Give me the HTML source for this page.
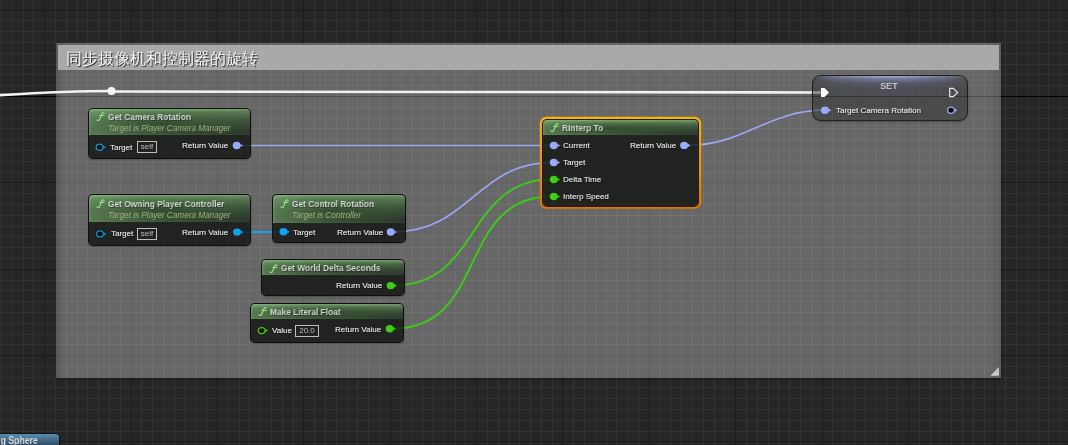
<!DOCTYPE html><html><head><meta charset="utf-8"><style>
*{margin:0;padding:0;box-sizing:border-box}
html,body{width:1068px;height:445px;overflow:hidden;background:#262626}
body{position:relative;font-family:"Liberation Sans",sans-serif}
.pl,.ttl,.sub,.settl,.box,.tt,.btn span{will-change:transform}
.abs{position:absolute}
.cmt{position:absolute;left:56px;top:43px;width:945px;height:335px;background:rgba(255,255,255,0.30);box-shadow:inset 7px 0 7px -5px rgba(0,0,0,0.22),inset -7px 0 7px -5px rgba(0,0,0,0.15),0 1px 2px rgba(0,0,0,0.5)}
.cmt .tb{position:absolute;left:2px;top:2px;right:2px;height:25px;background:#a9a9a9}
.cmt .tt{position:absolute;left:7.5px;top:5.3px;font-size:15.8px;font-weight:500;color:#f2f2f2;text-shadow:1px 1px 0.8px rgba(20,20,20,0.85);white-space:nowrap;line-height:18px}
.node{position:absolute;border-radius:4px;background:rgba(12,14,12,0.77);box-shadow:0 0 0 1px #0e0e0e,0 1px 3px rgba(0,0,0,0.5)}
.node.sel{box-shadow:0 0 0 1px #2a1a06}
.selr{position:absolute;border-radius:6px;background:linear-gradient(#f4b200,#e88a00)}
.hdr{position:absolute;left:0;top:0;right:0;border-radius:4px 4px 0 0;background:linear-gradient(to bottom, rgba(190,240,180,0.25) 0px, rgba(190,240,180,0.08) 2px, rgba(0,0,0,0) 4px),radial-gradient(ellipse 65% 65% at 45% 55%, rgba(15,30,15,0.5), rgba(15,30,15,0) 100%),linear-gradient(to bottom right,#6e9868 0%,#62895c 35%,#55764f 55%,#3b5039 78%,#283228 100%);box-shadow:inset 1px 0 2px rgba(170,230,160,0.25)}
.ttl{position:absolute;font-weight:bold;color:#d4d4d4;white-space:nowrap;text-shadow:1px 1px 0 rgba(0,0,0,0.35);transform:scaleX(0.87);transform-origin:0 0}
.sub{position:absolute;font-style:italic;color:#a3b07e;white-space:nowrap}
.pl{position:absolute;color:#e6e6e6;white-space:nowrap;text-shadow:0.4px 0 0 rgba(230,230,230,0.4),1px 1px 0 rgba(0,0,0,0.6)}
.box{position:absolute;border:1px solid #bdbdbd}
.box span{position:absolute;left:0;right:0;top:0.2px;text-align:center;font-size:8px;line-height:9px;color:#bdbdbd}
.setn{position:absolute;border-radius:8px;background:rgba(40,40,40,0.45);box-shadow:0 0 0 1px #1e1e1e,0 1px 3px rgba(0,0,0,0.5);overflow:hidden}
.setgl{position:absolute;left:0;top:0;right:0;height:20px;background:linear-gradient(to bottom,rgba(175,190,245,0.8) 0px,rgba(150,165,225,0.5) 3px,rgba(120,130,185,0.2) 8px,rgba(100,110,160,0.12) 14px,rgba(90,100,150,0.18) 19px);-webkit-mask-image:linear-gradient(to right,rgba(0,0,0,0.1) 0%,rgba(0,0,0,0.6) 15%,#000 40%,#000 60%,rgba(0,0,0,0.6) 85%,rgba(0,0,0,0.1) 100%)}
.settl{position:absolute;text-align:center;font-size:9px;line-height:11px;color:#d4d4d4;text-shadow:0.4px 0 0 rgba(212,212,212,0.5)}
.setsep{position:absolute;left:0;right:0;top:20px;height:1px;background:#333}
.btn{position:absolute;left:-20px;top:432.5px;width:80px;height:20px;border-radius:4px;border:1px solid #111;background:linear-gradient(#5b8db0,#2f4f66 60%,#2a3f50)}
.btn span{position:absolute;right:21.5px;top:1.5px;font-size:10px;line-height:12px;font-weight:bold;color:#d8d8d8;white-space:nowrap;transform:scaleX(0.87);transform-origin:100% 0}
</style></head><body>
<svg class="abs" width="1068" height="445" style="left:0;top:0" shape-rendering="crispEdges"><rect width="1068" height="445" fill="#262626"/><rect x="1" y="0" width="1" height="445" fill="#333333"/><rect x="12" y="0" width="1" height="445" fill="#333333"/><rect x="23" y="0" width="1" height="445" fill="#333333"/><rect x="33" y="0" width="1" height="445" fill="#333333"/><rect x="55" y="0" width="1" height="445" fill="#333333"/><rect x="66" y="0" width="1" height="445" fill="#333333"/><rect x="77" y="0" width="1" height="445" fill="#333333"/><rect x="87" y="0" width="1" height="445" fill="#333333"/><rect x="98" y="0" width="1" height="445" fill="#333333"/><rect x="109" y="0" width="1" height="445" fill="#333333"/><rect x="120" y="0" width="1" height="445" fill="#333333"/><rect x="141" y="0" width="1" height="445" fill="#333333"/><rect x="152" y="0" width="1" height="445" fill="#333333"/><rect x="163" y="0" width="1" height="445" fill="#333333"/><rect x="174" y="0" width="1" height="445" fill="#333333"/><rect x="185" y="0" width="1" height="445" fill="#333333"/><rect x="195" y="0" width="1" height="445" fill="#333333"/><rect x="206" y="0" width="1" height="445" fill="#333333"/><rect x="228" y="0" width="1" height="445" fill="#333333"/><rect x="239" y="0" width="1" height="445" fill="#333333"/><rect x="249" y="0" width="1" height="445" fill="#333333"/><rect x="260" y="0" width="1" height="445" fill="#333333"/><rect x="271" y="0" width="1" height="445" fill="#333333"/><rect x="282" y="0" width="1" height="445" fill="#333333"/><rect x="293" y="0" width="1" height="445" fill="#333333"/><rect x="314" y="0" width="1" height="445" fill="#333333"/><rect x="325" y="0" width="1" height="445" fill="#333333"/><rect x="336" y="0" width="1" height="445" fill="#333333"/><rect x="347" y="0" width="1" height="445" fill="#333333"/><rect x="357" y="0" width="1" height="445" fill="#333333"/><rect x="368" y="0" width="1" height="445" fill="#333333"/><rect x="379" y="0" width="1" height="445" fill="#333333"/><rect x="401" y="0" width="1" height="445" fill="#333333"/><rect x="411" y="0" width="1" height="445" fill="#333333"/><rect x="422" y="0" width="1" height="445" fill="#333333"/><rect x="433" y="0" width="1" height="445" fill="#333333"/><rect x="444" y="0" width="1" height="445" fill="#333333"/><rect x="455" y="0" width="1" height="445" fill="#333333"/><rect x="465" y="0" width="1" height="445" fill="#333333"/><rect x="487" y="0" width="1" height="445" fill="#333333"/><rect x="498" y="0" width="1" height="445" fill="#333333"/><rect x="509" y="0" width="1" height="445" fill="#333333"/><rect x="519" y="0" width="1" height="445" fill="#333333"/><rect x="530" y="0" width="1" height="445" fill="#333333"/><rect x="541" y="0" width="1" height="445" fill="#333333"/><rect x="552" y="0" width="1" height="445" fill="#333333"/><rect x="573" y="0" width="1" height="445" fill="#333333"/><rect x="584" y="0" width="1" height="445" fill="#333333"/><rect x="595" y="0" width="1" height="445" fill="#333333"/><rect x="606" y="0" width="1" height="445" fill="#333333"/><rect x="616" y="0" width="1" height="445" fill="#333333"/><rect x="627" y="0" width="1" height="445" fill="#333333"/><rect x="638" y="0" width="1" height="445" fill="#333333"/><rect x="660" y="0" width="1" height="445" fill="#333333"/><rect x="670" y="0" width="1" height="445" fill="#333333"/><rect x="681" y="0" width="1" height="445" fill="#333333"/><rect x="692" y="0" width="1" height="445" fill="#333333"/><rect x="703" y="0" width="1" height="445" fill="#333333"/><rect x="714" y="0" width="1" height="445" fill="#333333"/><rect x="724" y="0" width="1" height="445" fill="#333333"/><rect x="746" y="0" width="1" height="445" fill="#333333"/><rect x="757" y="0" width="1" height="445" fill="#333333"/><rect x="768" y="0" width="1" height="445" fill="#333333"/><rect x="778" y="0" width="1" height="445" fill="#333333"/><rect x="789" y="0" width="1" height="445" fill="#333333"/><rect x="800" y="0" width="1" height="445" fill="#333333"/><rect x="811" y="0" width="1" height="445" fill="#333333"/><rect x="832" y="0" width="1" height="445" fill="#333333"/><rect x="843" y="0" width="1" height="445" fill="#333333"/><rect x="854" y="0" width="1" height="445" fill="#333333"/><rect x="865" y="0" width="1" height="445" fill="#333333"/><rect x="876" y="0" width="1" height="445" fill="#333333"/><rect x="886" y="0" width="1" height="445" fill="#333333"/><rect x="897" y="0" width="1" height="445" fill="#333333"/><rect x="919" y="0" width="1" height="445" fill="#333333"/><rect x="930" y="0" width="1" height="445" fill="#333333"/><rect x="940" y="0" width="1" height="445" fill="#333333"/><rect x="951" y="0" width="1" height="445" fill="#333333"/><rect x="962" y="0" width="1" height="445" fill="#333333"/><rect x="973" y="0" width="1" height="445" fill="#333333"/><rect x="984" y="0" width="1" height="445" fill="#333333"/><rect x="1005" y="0" width="1" height="445" fill="#333333"/><rect x="1016" y="0" width="1" height="445" fill="#333333"/><rect x="1027" y="0" width="1" height="445" fill="#333333"/><rect x="1038" y="0" width="1" height="445" fill="#333333"/><rect x="1048" y="0" width="1" height="445" fill="#333333"/><rect x="1059" y="0" width="1" height="445" fill="#333333"/><rect x="0" y="-1" width="1068" height="1" fill="#333333"/><rect x="0" y="20" width="1068" height="1" fill="#333333"/><rect x="0" y="31" width="1068" height="1" fill="#333333"/><rect x="0" y="42" width="1068" height="1" fill="#333333"/><rect x="0" y="53" width="1068" height="1" fill="#333333"/><rect x="0" y="64" width="1068" height="1" fill="#333333"/><rect x="0" y="74" width="1068" height="1" fill="#333333"/><rect x="0" y="85" width="1068" height="1" fill="#333333"/><rect x="0" y="107" width="1068" height="1" fill="#333333"/><rect x="0" y="118" width="1068" height="1" fill="#333333"/><rect x="0" y="128" width="1068" height="1" fill="#333333"/><rect x="0" y="139" width="1068" height="1" fill="#333333"/><rect x="0" y="150" width="1068" height="1" fill="#333333"/><rect x="0" y="161" width="1068" height="1" fill="#333333"/><rect x="0" y="172" width="1068" height="1" fill="#333333"/><rect x="0" y="193" width="1068" height="1" fill="#333333"/><rect x="0" y="204" width="1068" height="1" fill="#333333"/><rect x="0" y="215" width="1068" height="1" fill="#333333"/><rect x="0" y="226" width="1068" height="1" fill="#333333"/><rect x="0" y="236" width="1068" height="1" fill="#333333"/><rect x="0" y="247" width="1068" height="1" fill="#333333"/><rect x="0" y="258" width="1068" height="1" fill="#333333"/><rect x="0" y="280" width="1068" height="1" fill="#333333"/><rect x="0" y="290" width="1068" height="1" fill="#333333"/><rect x="0" y="301" width="1068" height="1" fill="#333333"/><rect x="0" y="312" width="1068" height="1" fill="#333333"/><rect x="0" y="323" width="1068" height="1" fill="#333333"/><rect x="0" y="334" width="1068" height="1" fill="#333333"/><rect x="0" y="344" width="1068" height="1" fill="#333333"/><rect x="0" y="366" width="1068" height="1" fill="#333333"/><rect x="0" y="377" width="1068" height="1" fill="#333333"/><rect x="0" y="387" width="1068" height="1" fill="#333333"/><rect x="0" y="398" width="1068" height="1" fill="#333333"/><rect x="0" y="409" width="1068" height="1" fill="#333333"/><rect x="0" y="420" width="1068" height="1" fill="#333333"/><rect x="0" y="431" width="1068" height="1" fill="#333333"/><rect x="44" y="0" width="1" height="445" fill="#1a1a1a"/><rect x="131" y="0" width="1" height="445" fill="#1a1a1a"/><rect x="217" y="0" width="1" height="445" fill="#1a1a1a"/><rect x="303" y="0" width="1" height="445" fill="#1a1a1a"/><rect x="390" y="0" width="1" height="445" fill="#1a1a1a"/><rect x="476" y="0" width="1" height="445" fill="#1a1a1a"/><rect x="562" y="0" width="1" height="445" fill="#1a1a1a"/><rect x="649" y="0" width="1" height="445" fill="#1a1a1a"/><rect x="735" y="0" width="1" height="445" fill="#1a1a1a"/><rect x="822" y="0" width="1" height="445" fill="#1a1a1a"/><rect x="908" y="0" width="1" height="445" fill="#1a1a1a"/><rect x="994" y="0" width="1" height="445" fill="#1a1a1a"/><rect x="0" y="10" width="1068" height="1" fill="#1a1a1a"/><rect x="0" y="96" width="1068" height="1" fill="#000"/><rect x="0" y="182" width="1068" height="1" fill="#1a1a1a"/><rect x="0" y="269" width="1068" height="1" fill="#1a1a1a"/><rect x="0" y="355" width="1068" height="1" fill="#1a1a1a"/><rect x="0" y="441" width="1068" height="1" fill="#1a1a1a"/></svg>
<div class="cmt"><div class="tb"><div class="tt">同步摄像机和控制器的旋转</div></div></div>
<svg class="abs" width="14" height="14" style="left:988px;top:364px"><path d="M2.7,11.7 L10.8,3.2 L10.8,11.7Z" fill="#dadada"/><path d="M5.2,11.9 L11,6 M7.8,11.9 L11,8.6 M4,9 L9,4 M6.5,9.5 L10.5,5.5" stroke="#7a7a7a" stroke-width="0.7" stroke-dasharray="1 1.2" fill="none"/></svg>
<svg class="abs" width="1068" height="445" style="left:0;top:0"><path d="M-220,106.5 C-104.33,106.5 -4.17,91 111.5,91" stroke="#f2f2f2" stroke-width="2.6" fill="none"/><path d="M111.5,91.5 C348.67,91.5 584.83,92.5 822,92.5" stroke="#f2f2f2" stroke-width="2.6" fill="none"/><path d="M240,145.5 C344.33,145.5 448.67,145.5 553,145.5" stroke="#98a8f4" stroke-width="1.6" fill="none"/><path d="M240,232 C254.67,232 269.33,232 284,232" stroke="#14a4ee" stroke-width="2" fill="none"/><path d="M393,232 C469.57,232 476.43,162.3 553,162.3" stroke="#98a8f4" stroke-width="1.7" fill="none"/><path d="M393,285.6 C481.77,285.6 464.23,179.3 553,179.3" stroke="#3fc71b" stroke-width="2" fill="none"/><path d="M392,328.7 C489.80,328.7 455.20,196.3 553,196.3" stroke="#3fc71b" stroke-width="2" fill="none"/><path d="M687,145.4 C744.73,145.4 767.27,110.2 825,110.2" stroke="#98a8f4" stroke-width="1.7" fill="none"/><circle cx="111.5" cy="91" r="4" fill="#f4f4f4"/></svg>
<div class="node" style="left:89px;top:109px;width:161px;height:48.5px"><div class="hdr" style="height:26px"></div></div><div class="node" style="left:89px;top:195px;width:161px;height:49.5px"><div class="hdr" style="height:26.5px"></div></div><div class="node" style="left:273px;top:195px;width:132px;height:47px"><div class="hdr" style="height:27.5px"></div></div><div class="node" style="left:262px;top:260px;width:142px;height:35px"><div class="hdr" style="height:15px"></div></div><div class="node" style="left:251px;top:303.5px;width:152px;height:38.0px"><div class="hdr" style="height:15.5px"></div></div><svg class="abs" style="left:538px;top:115px" width="166" height="96"><defs><linearGradient id="og" x1="0" y1="0" x2="0" y2="1"><stop offset="0" stop-color="#f6b400"/><stop offset="1" stop-color="#e07600"/></linearGradient></defs><rect x="3.2" y="3.2" width="158.6" height="89.1" rx="5" fill="none" stroke="url(#og)" stroke-width="2.8"/></svg><div class="node sel" style="left:543px;top:120px;width:155px;height:85.5px"><div class="hdr" style="height:14.699999999999989px"></div></div>
<div class="setn" style="left:813px;top:76px;width:153.5px;height:44px">
<div class="setgl"></div>
<div class="setsep"></div>
</div>
<svg class="abs" width="1068" height="445" style="left:0;top:0">
<path d="M821,88 H824.5 L829,92.5 L824.5,97 H821Z" fill="#fafafa"/>
<path d="M949.7,88.4 H953.3 L957.6,92.5 L953.3,96.6 H949.7Z" fill="none" stroke="#e6e6e6" stroke-width="1.2"/>
</svg>

<svg class="abs" width="1068" height="445" style="left:0;top:0"><ellipse cx="99.5" cy="147.3" rx="3.35" ry="3.1" fill="#0d0d0d" stroke="#0f93dc" stroke-width="1.25"/><path d="M103.4,145.70000000000002 L105.8,147.3 L103.4,148.9Z" fill="#0f93dc"/><ellipse cx="236.7" cy="145.5" rx="4" ry="3.7" fill="#9aaaf6"/><path d="M240.6,143.9 L243.0,145.5 L240.6,147.1Z" fill="#9aaaf6"/><ellipse cx="100" cy="233.9" rx="3.35" ry="3.1" fill="#0d0d0d" stroke="#0f93dc" stroke-width="1.25"/><path d="M103.9,232.3 L106.3,233.9 L103.9,235.5Z" fill="#0f93dc"/><ellipse cx="237" cy="232.1" rx="4" ry="3.7" fill="#0ea4f0"/><path d="M240.9,230.5 L243.3,232.1 L240.9,233.7Z" fill="#0ea4f0"/><ellipse cx="283.5" cy="231.8" rx="4" ry="3.7" fill="#0ea4f0"/><path d="M287.4,230.20000000000002 L289.8,231.8 L287.4,233.4Z" fill="#0ea4f0"/><ellipse cx="390.7" cy="232" rx="4" ry="3.7" fill="#9aaaf6"/><path d="M394.59999999999997,230.4 L397.0,232 L394.59999999999997,233.6Z" fill="#9aaaf6"/><ellipse cx="390.7" cy="285.6" rx="4" ry="3.7" fill="#3ecf12"/><path d="M394.59999999999997,284.0 L397.0,285.6 L394.59999999999997,287.20000000000005Z" fill="#3ecf12"/><ellipse cx="261.7" cy="330.6" rx="3.35" ry="3.1" fill="#0d0d0d" stroke="#3ecf12" stroke-width="1.25"/><path d="M265.59999999999997,329.0 L268.0,330.6 L265.59999999999997,332.20000000000005Z" fill="#3ecf12"/><ellipse cx="389.7" cy="328.7" rx="4" ry="3.7" fill="#3ecf12"/><path d="M393.59999999999997,327.09999999999997 L396.0,328.7 L393.59999999999997,330.3Z" fill="#3ecf12"/><ellipse cx="553.8" cy="145.5" rx="4" ry="3.7" fill="#9aaaf6"/><path d="M557.6999999999999,143.9 L560.0999999999999,145.5 L557.6999999999999,147.1Z" fill="#9aaaf6"/><ellipse cx="553.8" cy="162.5" rx="4" ry="3.7" fill="#9aaaf6"/><path d="M557.6999999999999,160.9 L560.0999999999999,162.5 L557.6999999999999,164.1Z" fill="#9aaaf6"/><ellipse cx="553.8" cy="179.5" rx="4" ry="3.7" fill="#3ecf12"/><path d="M557.6999999999999,177.9 L560.0999999999999,179.5 L557.6999999999999,181.1Z" fill="#3ecf12"/><ellipse cx="553.8" cy="196.5" rx="4" ry="3.7" fill="#3ecf12"/><path d="M557.6999999999999,194.9 L560.0999999999999,196.5 L557.6999999999999,198.1Z" fill="#3ecf12"/><ellipse cx="684.1" cy="145.4" rx="4" ry="3.7" fill="#9aaaf6"/><path d="M688.0,143.8 L690.4,145.4 L688.0,147.0Z" fill="#9aaaf6"/><ellipse cx="825" cy="110.2" rx="4" ry="3.7" fill="#9aaaf6"/><path d="M828.9,108.60000000000001 L831.3,110.2 L828.9,111.8Z" fill="#9aaaf6"/><ellipse cx="951" cy="110.2" rx="3.35" ry="3.1" fill="#0d0d0d" stroke="#9aaaf6" stroke-width="1.25"/><path d="M954.9,108.60000000000001 L957.3,110.2 L954.9,111.8Z" fill="#9aaaf6"/></svg>
<svg class="abs" width="14" height="14" style="left:92px;top:110.4px"><path d="M12,3.4 C11.5,2.5 10.2,2.6 9.7,4 L7.7,9.3 C7.2,10.6 6,10.8 5.1,10.0 M7.9,5.4 L12,5.5" stroke="#98dd88" stroke-width="1.2" fill="none" stroke-linecap="round"/></svg><div class="ttl" style="left:107.7px;top:111.33px;font-size:9.6px;line-height:12.0px">Get Camera Rotation</div><div class="sub" style="left:107.8px;top:124.06px;font-size:8.2px;line-height:10.25px">Target is Player Camera Manager</div><svg class="abs" width="14" height="14" style="left:92px;top:196.9px"><path d="M12,3.4 C11.5,2.5 10.2,2.6 9.7,4 L7.7,9.3 C7.2,10.6 6,10.8 5.1,10.0 M7.9,5.4 L12,5.5" stroke="#98dd88" stroke-width="1.2" fill="none" stroke-linecap="round"/></svg><div class="ttl" style="left:107.7px;top:197.83px;font-size:9.6px;line-height:12.0px">Get Owning Player Controller</div><div class="sub" style="left:107.8px;top:210.56px;font-size:8.2px;line-height:10.25px">Target is Player Camera Manager</div><svg class="abs" width="14" height="14" style="left:276px;top:196.9px"><path d="M12,3.4 C11.5,2.5 10.2,2.6 9.7,4 L7.7,9.3 C7.2,10.6 6,10.8 5.1,10.0 M7.9,5.4 L12,5.5" stroke="#98dd88" stroke-width="1.2" fill="none" stroke-linecap="round"/></svg><div class="ttl" style="left:291.7px;top:197.83px;font-size:9.6px;line-height:12.0px">Get Control Rotation</div><div class="sub" style="left:291.8px;top:210.56px;font-size:8.2px;line-height:10.25px">Target is Controller</div><svg class="abs" width="14" height="14" style="left:265px;top:261.9px"><path d="M12,3.4 C11.5,2.5 10.2,2.6 9.7,4 L7.7,9.3 C7.2,10.6 6,10.8 5.1,10.0 M7.9,5.4 L12,5.5" stroke="#98dd88" stroke-width="1.2" fill="none" stroke-linecap="round"/></svg><div class="ttl" style="left:280.9px;top:262.33px;font-size:9.6px;line-height:12.0px">Get World Delta Seconds</div><svg class="abs" width="14" height="14" style="left:254px;top:305.4px"><path d="M12,3.4 C11.5,2.5 10.2,2.6 9.7,4 L7.7,9.3 C7.2,10.6 6,10.8 5.1,10.0 M7.9,5.4 L12,5.5" stroke="#98dd88" stroke-width="1.2" fill="none" stroke-linecap="round"/></svg><div class="ttl" style="left:269.9px;top:306.33px;font-size:9.6px;line-height:12.0px">Make Literal Float</div><svg class="abs" width="14" height="14" style="left:546px;top:120.80000000000001px"><path d="M12,3.4 C11.5,2.5 10.2,2.6 9.7,4 L7.7,9.3 C7.2,10.6 6,10.8 5.1,10.0 M7.9,5.4 L12,5.5" stroke="#98dd88" stroke-width="1.2" fill="none" stroke-linecap="round"/></svg><div class="ttl" style="left:561.8px;top:122.33px;font-size:9.6px;line-height:12.0px">RInterp To</div><div class="pl" style="left:110px;top:143.36px;font-size:8px;line-height:10.0px">Target</div><div class="box" style="left:137px;top:141px;width:20px;height:12px"><span>self</span></div><div class="pl" style="left:182px;top:141.26px;font-size:8px;line-height:10.0px">Return Value</div><div class="pl" style="left:110.6px;top:229.36px;font-size:8px;line-height:10.0px">Target</div><div class="box" style="left:137px;top:228px;width:20px;height:12px"><span>self</span></div><div class="pl" style="left:182px;top:228.16px;font-size:8px;line-height:10.0px">Return Value</div><div class="pl" style="left:293.4px;top:228.16px;font-size:8px;line-height:10.0px">Target</div><div class="pl" style="left:337.1px;top:228.16px;font-size:8px;line-height:10.0px">Return Value</div><div class="pl" style="left:336px;top:281.36px;font-size:8px;line-height:10.0px">Return Value</div><div class="pl" style="left:272px;top:325.96px;font-size:8px;line-height:10.0px">Value</div><div class="box" style="left:295px;top:325px;width:24px;height:12px"><span>20.0</span></div><div class="pl" style="left:334.9px;top:325.26px;font-size:8px;line-height:10.0px">Return Value</div><div class="pl" style="left:563.2px;top:141.36px;font-size:8px;line-height:10.0px">Current</div><div class="pl" style="left:563.2px;top:158.36px;font-size:8px;line-height:10.0px">Target</div><div class="pl" style="left:563.2px;top:175.36px;font-size:8px;line-height:10.0px">Delta Time</div><div class="pl" style="left:563.2px;top:192.36px;font-size:8px;line-height:10.0px">Interp Speed</div><div class="pl" style="left:630.1px;top:141.06px;font-size:8px;line-height:10.0px">Return Value</div><div class="pl" style="left:835.7px;top:106.16px;font-size:8px;line-height:10.0px">Target Camera Rotation</div><div class="settl" style="left:812px;width:153.5px;top:81px">SET</div>
<div class="btn"><span>g Sphere</span></div>
</body></html>
